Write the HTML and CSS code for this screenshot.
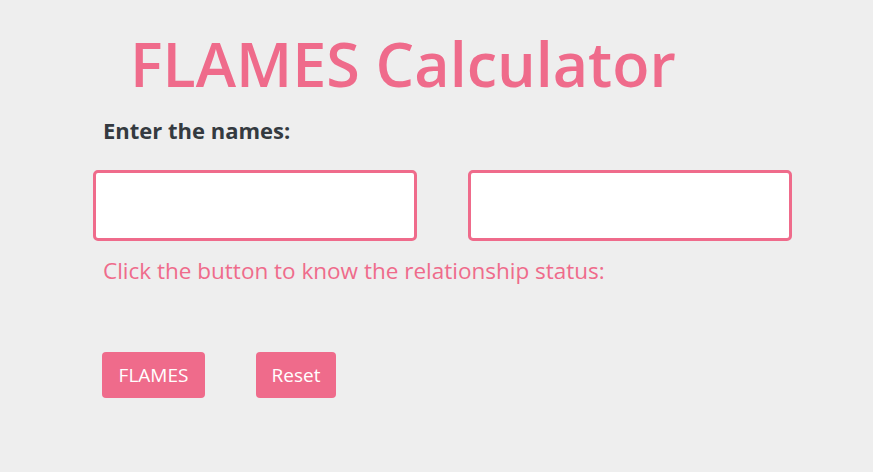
FILE: index.html
```html
<!DOCTYPE html>
<html>
<head>
<meta charset="utf-8">
<link rel="stylesheet" href="styles.css">
</head>
<body>
<div class="page">
  <h1 class="title">FLAMES Calculator</h1>
  <h3 class="label">Enter the names:</h3>
  <div class="inputs">
    <input class="name" type="text">
    <input class="name" type="text">
  </div>
  <p class="hint">Click the button to know the relationship status:</p>
  <div class="buttons">
    <button class="btn btn-flames">FLAMES</button>
    <button class="btn btn-reset">Reset</button>
  </div>
</div>
</body>
</html>
```
FILE: styles.css
```css
html, body {
  margin: 0;
  padding: 0;
  background: #eeeeee;
}
body {
  font-family: "Open Sans", "Noto Sans", sans-serif;
  width: 873px;
  height: 472px;
  overflow: hidden;
}
.page {
  padding: 0 0 0 93px;
  display: flex;
  flex-direction: column;
  align-items: flex-start;
}
.title {
  margin: 24px 0 0 37px;
  font-size: 61px;
  font-weight: 600;
  line-height: 80px;
  color: #ef6b8b;
}
.label {
  margin: 12px 0 0 10px;
  font-size: 22px;
  line-height: 28px;
  font-weight: 700;
  color: #343a40;
}
.inputs {
  display: flex;
  gap: 51px;
  margin-top: 26px;
}
.name {
  box-sizing: border-box;
  width: 324px;
  height: 71px;
  border: 3px solid #ef6b8b;
  border-radius: 5px;
  background: #fff;
  outline: none;
  margin: 0;
}
.hint {
  margin: 13px 0 0 10px;
  font-size: 22.5px;
  line-height: 34px;
  color: #ef6b8b;
}
.buttons {
  display: flex;
  gap: 51px;
  margin: 64px 0 0 9px;
}
.btn {
  border: none;
  border-radius: 4px;
  background: #ef6b8b;
  color: #fff;
  font-family: "Open Sans", "Noto Sans", sans-serif;
  font-size: 19px;
  height: 46px;
  padding: 0;
}
.btn-flames { width: 103px; }
.btn-reset { width: 80px; }
```
